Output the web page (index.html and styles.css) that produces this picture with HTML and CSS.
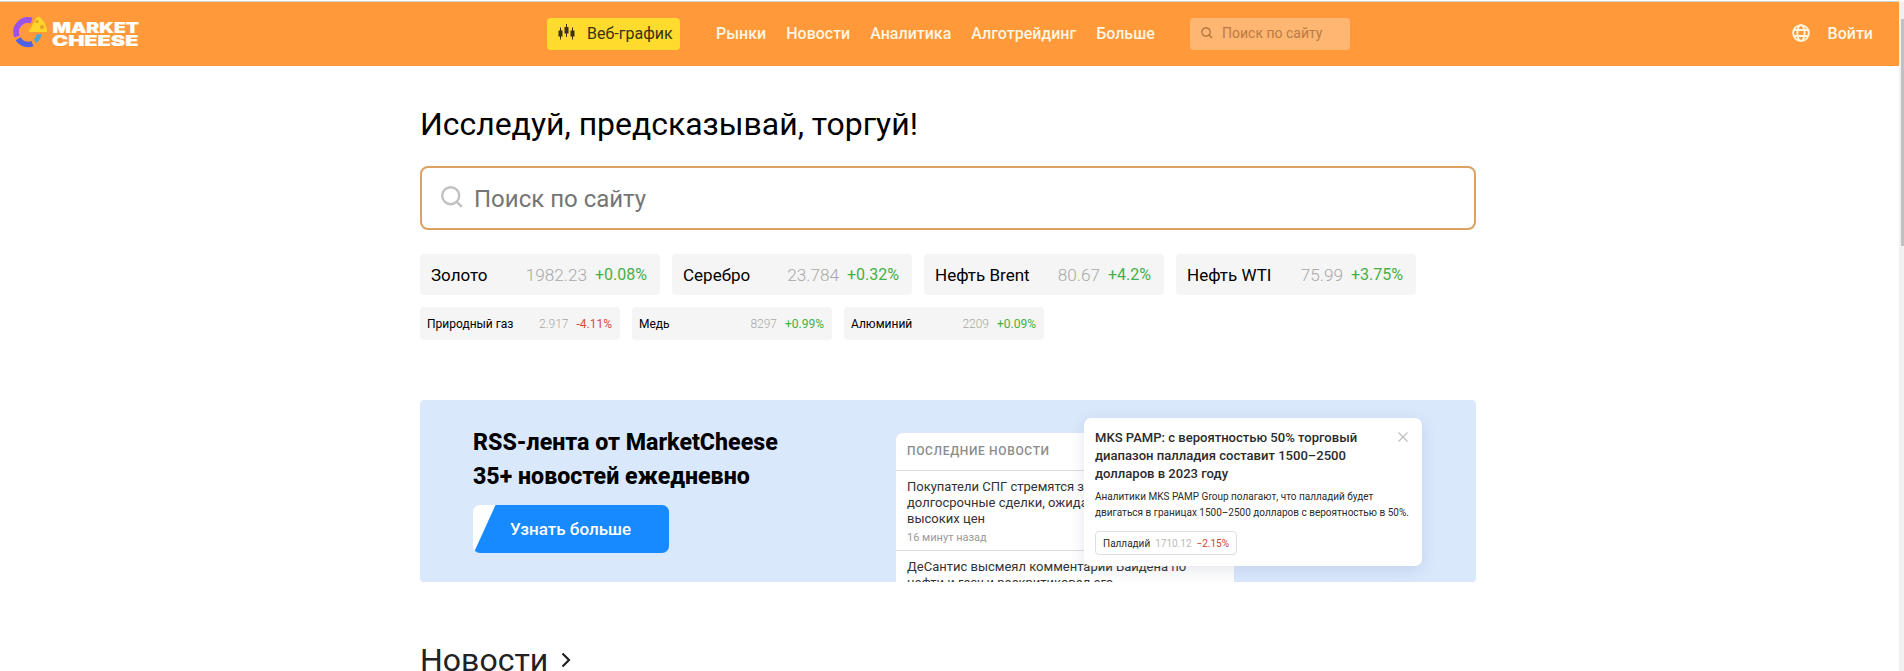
FILE: index.html
```html
<!DOCTYPE html>
<html lang="ru">
<head>
    <meta charset="UTF-8">
    <meta name="viewport" content="width=device-width, initial-scale=1.0">
    <title>MarketCheese</title>
    <link rel="stylesheet" href="styles.css">
</head>
<body>
    <header class="header">
        <a class="logo" href="#">
            <svg width="130" height="36" viewBox="0 0 130 36">
                <path d="M19.700 5.500A12 12 0 0 0 5 21.500" fill="none" stroke="#9a52e8" stroke-width="5.600"/>
                <path d="M6 23.800A12 12 0 0 0 20.500 28.600" fill="none" stroke="#4f62e6" stroke-width="5.600"/>
                <path d="M22 24.500L25 19.300H30Q29 24 24.500 28.300Z" fill="#4ea6d8"/>
                <path d="M16.500 17L24 3.200Q26 .5 28.500 2.800Q34 7.500 35.300 17Z" fill="#ffd429"/>
                <circle cx="25" cy="6.500" r="1.500" fill="#e89a2c"/>
                <circle cx="30" cy="12" r="1.900" fill="#e89a2c"/>
                <text x="40.500" y="18" textLength="86.500" lengthAdjust="spacingAndGlyphs">MARKET</text>
                <text x="40" y="31" textLength="86.500" lengthAdjust="spacingAndGlyphs">CHEESE</text>
            </svg>
        </a>
        <div class="header-center">
            <a class="web-chart" href="#">
                <svg width="18" height="18" viewBox="0 0 18 18" fill="#3a3210">
                    <path d="M.5 6.500h4v6h-4zM6.500 3h4v6.500h-4zM12.500 6.500h4v6h-4z"/>
                    <path d="M2 3.500h1v12H2zM8 0h1v13H8zM14 3.500h1v12h-1z"/>
                </svg>
                <span>Веб-график</span>
            </a>
            <nav class="nav">
                <a href="#">Рынки</a>
                <a href="#">Новости</a>
                <a href="#">Аналитика</a>
                <a href="#">Алготрейдинг</a>
                <a href="#">Больше</a>
            </nav>
            <div class="header-search">
                <svg width="12" height="12" viewBox="0 0 12 12" fill="none" stroke="#a9713b" stroke-width="1.200">
                    <circle cx="5" cy="5" r="4.200"/>
                    <path d="M8 8l3 3"/>
                </svg>
                <span>Поиск по сайту</span>
            </div>
        </div>
        <div class="user">
            <svg width="18" height="18" viewBox="0 0 18 18" fill="none" stroke="#fff5dc" stroke-width="1.900">
                <circle cx="9" cy="9" r="7.900"/>
                <ellipse cx="9" cy="9" rx="3.600" ry="8"/>
                <path d="M1.800 6h14.400M1.800 12h14.400"/>
            </svg>
            <a href="#">Войти</a>
        </div>
    </header>

    <main class="container">
        <h1>Исследуй, предсказывай, торгуй!</h1>
        <div class="search">
            <svg width="22" height="22" viewBox="0 0 22 22" fill="none" stroke="#c2c2c2" stroke-width="2.400">
                <circle cx="9.700" cy="9.700" r="8.500"/>
                <path d="M15.800 15.800l5 5"/>
            </svg>
            <span>Поиск по сайту</span>
        </div>

        <div class="quotes">
            <div class="quote"><span class="name">Золото</span><span class="price">1982.23</span><span class="up">+0.08%</span></div>
            <div class="quote"><span class="name">Серебро</span><span class="price">23.784</span><span class="up">+0.32%</span></div>
            <div class="quote"><span class="name">Нефть Brent</span><span class="price">80.67</span><span class="up">+4.2%</span></div>
            <div class="quote"><span class="name">Нефть WTI</span><span class="price">75.99</span><span class="up">+3.75%</span></div>
        </div>
        <div class="quotes quotes-small">
            <div class="quote"><span class="name">Природный газ</span><span class="price">2.917</span><span class="down">-4.11%</span></div>
            <div class="quote"><span class="name">Медь</span><span class="price">8297</span><span class="up">+0.99%</span></div>
            <div class="quote"><span class="name">Алюминий</span><span class="price">2209</span><span class="up">+0.09%</span></div>
        </div>

        <section class="banner">
            <div class="banner-text">
                <h2>RSS-лента от MarketCheese<br>35+ новостей ежедневно</h2>
                <a class="more" href="#">Узнать больше</a>
            </div>
            <div class="feed">
                <div class="feed-title">ПОСЛЕДНИЕ НОВОСТИ</div>
                <div class="feed-item">
                    <p>Покупатели СПГ стремятся заключать<br>долгосрочные сделки, ожидая<br>высоких цен</p>
                    <time>16 минут назад</time>
                </div>
                <div class="feed-item">
                    <p>ДеСантис высмеял комментарий Байдена по<br>нефти и газу и раскритиковал его</p>
                </div>
            </div>
            <div class="popup">
                <svg class="close" width="10" height="10" viewBox="0 0 10 10" stroke="#bdbdbd" stroke-width="1.100">
                    <path d="M.5.5l9 9M9.500.5l-9 9"/>
                </svg>
                <h3>MKS PAMP: с вероятностью 50% торговый<br>диапазон палладия составит 1500–2500<br>долларов в 2023 году</h3>
                <p>Аналитики MKS PAMP Group полагают, что палладий будет<br>двигаться в границах 1500–2500 долларов с вероятностью в 50%.</p>
                <div class="tag"><span>Палладий</span><span class="tag-price">1710.12</span><span class="tag-down">−2.15%</span></div>
            </div>
        </section>

        <h2 class="section-title">
            <span>Новости</span>
            <svg width="10" height="16" viewBox="0 0 10 16" fill="none" stroke="#222" stroke-width="2.200">
                <path d="M1.500 1.500L8 8l-6.500 6.500"/>
            </svg>
        </h2>
    </main>
    <div class="scrollbar"><div class="scrollbar-thumb"></div></div>
</body>
</html>
```

FILE: styles.css
```css
* {
    box-sizing: border-box;
}

body {
    margin: 0;
    height: 671px;
    overflow: hidden;
    background: #fff;
    color: #000;
    font-family: Roboto, "Liberation Sans", sans-serif;
}

a {
    color: inherit;
    text-decoration: none;
}

h1, h2, h3, p {
    margin: 0;
}

svg {
    display: block;
    flex: none;
}

/* Header */
.header {
    display: flex;
    align-items: center;
    justify-content: space-between;
    width: 1899px;
    height: 66px;
    padding: 2px 26px 0 12px;
    background: linear-gradient(#fff 1px, #d9d5d0 1px, #d9d5d0 2px, #ff993a 2px);
    white-space: nowrap;
}

.logo {
    width: 535px;
}

.logo svg {
    margin-top: -2px;
}

.logo text {
    font-family: Inter, "Liberation Sans", sans-serif;
    font-size: 14.5px;
    font-weight: 900;
    fill: #fff;
    stroke: #fff;
    stroke-width: 0.2px;
}

.header-center {
    display: flex;
    align-items: center;
    flex: 1;
}

.web-chart {
    display: flex;
    align-items: center;
    gap: 11px;
    width: 133px;
    height: 32px;
    padding: 0 0 2px 11px;
    border-radius: 4px;
    background: #ffdb2e;
    color: #3a3210;
    font-size: 16px;
}

.nav {
    display: flex;
    gap: 20px;
    width: 474px;
    margin-left: 36px;
    padding-bottom: 2px;
    color: #fff5e0;
    font-size: 16px;
    font-weight: 500;
}

.header-search {
    display: flex;
    align-items: center;
    gap: 9px;
    width: 160px;
    height: 32px;
    padding: 0 0 2px 11px;
    border-radius: 4px;
    background: #ffb673;
    color: #b87b43;
    font-size: 14px;
}

.user {
    display: flex;
    align-items: center;
    gap: 18px;
    padding-bottom: 2px;
    color: #fff5e0;
    font-size: 16px;
    font-weight: 500;
}

/* Main search */
.container {
    width: 1056px;
    margin-left: 420px;
}

h1 {
    padding-top: 38px;
    font-size: 31.95px;
    font-weight: 400;
    line-height: 40px;
    white-space: nowrap;
}

.search {
    display: flex;
    align-items: center;
    gap: 11px;
    height: 64px;
    margin-top: 22px;
    padding: 2px 0 0 19px;
    border: 2px solid #dca262;
    border-radius: 8px;
    color: #757575;
    font-size: 24px;
}

.search svg {
    margin-top: -5px;
}

/* Quotes */
.quotes {
    display: flex;
    gap: 12px;
    margin-top: 24px;
}

.quote {
    display: flex;
    align-items: center;
    width: 240px;
    height: 41px;
    padding: 0 13px 0 11px;
    border-radius: 4px;
    background: #f5f5f5;
    font-size: 16px;
    white-space: nowrap;
}

.name {
    flex: 1;
    padding-top: 1px;
    font-size: 17px;
}

.price {
    margin-right: 8px;
    padding-top: 1px;
    color: #a8a8a8;
    font-size: 17.2px;
    font-weight: 300;
}

.up {
    color: #43b048;
}

.down {
    color: #dd4b39;
}

.quotes-small {
    margin-top: 12px;
}

.quotes-small .quote {
    width: 200px;
    height: 33px;
    padding: 0 8px 0 7px;
    font-size: 12px;
}

.quotes-small .name,
.quotes-small .price {
    padding-top: 0;
    font-size: 12px;
}

/* Banner */
.banner {
    display: flex;
    position: relative;
    height: 182px;
    margin-top: 60px;
    border-radius: 4px;
    background: #dae8fc;
    overflow: hidden;
    white-space: nowrap;
}

.banner-text {
    width: 476px;
    padding: 25px 0 0 53px;
}

.banner-text h2 {
    font-size: 23.2px;
    font-weight: 800;
    line-height: 34px;
}

.more {
    display: block;
    width: 196px;
    height: 48px;
    margin-top: 12px;
    padding-left: 37px;
    border-radius: 7px;
    background: linear-gradient(114.5deg, #fff 20px, #178aff 21px);
    color: #fff;
    font-size: 17px;
    font-weight: 500;
    line-height: 48px;
}

.feed {
    width: 338px;
    height: 160px;
    margin-top: 33px;
    border-radius: 7px 7px 0 0;
    background: #fff;
    color: #333;
}

.feed-title {
    height: 38px;
    padding-left: 11px;
    border-bottom: 1px solid #ddd;
    color: #8c8c8c;
    font-size: 12px;
    font-weight: 500;
    line-height: 36px;
    letter-spacing: 0.65px;
}

.feed-item {
    height: 80px;
    padding: 8px 0 0 11px;
    border-bottom: 1px solid #ddd;
    font-size: 13px;
    line-height: 16px;
}

.feed-item time {
    display: block;
    margin-top: 3px;
    color: #999;
    font-size: 11px;
}

.popup {
    position: absolute;
    top: 18px;
    left: 664px;
    width: 338px;
    height: 148px;
    padding: 11px 11px 10px;
    border-radius: 7px;
    background: #fff;
    box-shadow: 0 4px 16px rgba(60, 80, 120, 0.14);
    color: #2b2b2b;
}

.popup h3 {
    font-size: 13.05px;
    font-weight: 500;
    line-height: 18px;
}

.popup p {
    margin-top: 6px;
    font-size: 10px;
    line-height: 16px;
}

.close {
    position: absolute;
    top: 14px;
    right: 14px;
}

.tag {
    display: flex;
    align-items: center;
    gap: 5px;
    width: 142px;
    height: 24px;
    margin-top: 10px;
    padding-left: 7px;
    border: 1px solid #dedede;
    border-radius: 4px;
    font-size: 10px;
}

.tag-price {
    color: #bbb;
}

.tag-down {
    color: #d3402f;
}

/* News */
.section-title {
    display: flex;
    align-items: center;
    gap: 13px;
    margin-top: 58px;
    color: #222;
    font-size: 32px;
    font-weight: 400;
    line-height: 40px;
}

/* Page scrollbar */
.scrollbar {
    position: absolute;
    top: 2px;
    right: 0;
    width: 5px;
    height: 669px;
    padding: 17px 0 0 2px;
    background: #f1f1f1;
}

.scrollbar-thumb {
    height: 227px;
    background: #c1c1c1;
}
```
